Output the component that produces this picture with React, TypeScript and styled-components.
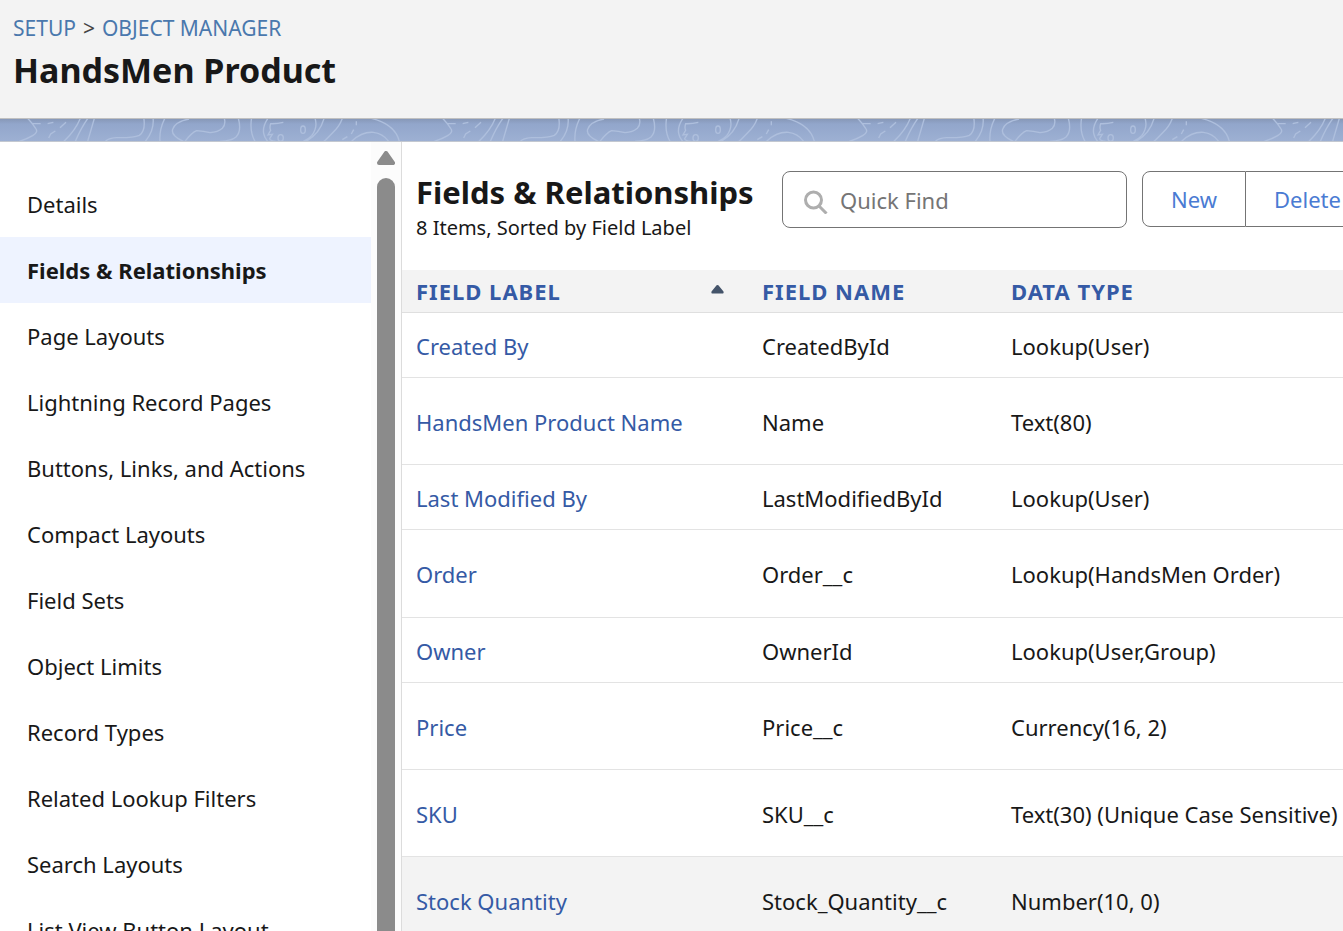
import React from 'react';
import styled, { createGlobalStyle } from 'styled-components';

const Global = createGlobalStyle`
  *, *::before, *::after { box-sizing: border-box; }
  body { margin: 0; background: #fff; color: #181818; overflow: hidden; font: 22px/32px "Noto Sans", "Open Sans", sans-serif; }
  button, input { font: inherit; }
  h1, h2, p, ul { margin: 0; padding: 0; }
`;

const Page = styled.div`
  height: 100vh;
  display: flex;
  flex-direction: column;
`;

const Header = styled.header`
  flex: none;
  height: 119px;
  padding: 12px 13px;
  background: #f3f3f3;
  border-bottom: 1px solid #c0c0c0;
`;

const Crumbs = styled.nav`
  display: flex;
  gap: 7px;
  color: #444;
  font-size: 21px;
`;

const CrumbLink = styled.a`
  color: #4a78ad;
  text-decoration: none;
`;

const PageTitle = styled.h1`
  font-size: 34px;
  line-height: 52px;
  font-weight: 700;
`;

const Band = styled.div`
  flex: none;
  height: 23px;
  border-bottom: 1px solid #c3c8d0;
  background: linear-gradient(#8798b8, #92a6cb 5px, #9db0d3);
  svg { display: block; }
`;

const Body = styled.div`
  flex: 1;
  min-height: 0;
  display: flex;
`;

const Sidebar = styled.aside`
  flex: none;
  width: 402px;
  display: flex;
  border-right: 1px solid #dcdcdc;
`;

const NavList = styled.ul`
  flex: 1;
  padding-top: 29px;
  list-style: none;
  overflow: hidden;
`;

const NavLink = styled.a<{ $active?: boolean }>`
  display: block;
  height: 66px;
  padding: 17px 27px;
  line-height: 32px;
  white-space: nowrap;
  color: #181818;
  text-decoration: none;
  background: ${(p) => (p.$active ? '#eef3ff' : 'transparent')};
  font-weight: ${(p) => (p.$active ? 700 : 400)};
`;

const Track = styled.div`
  flex: none;
  width: 30px;
  padding-top: 9px;
  display: flex;
  flex-direction: column;
  align-items: center;
  gap: 13px;
  background: #fcfcfc;
`;

const Thumb = styled.div`
  flex: 1;
  width: 18px;
  border-radius: 9px 9px 0 0;
  background: #8b8b8b;
`;

const Main = styled.main`
  flex: 1;
  min-width: 0;
  overflow: hidden;
`;

const Toolbar = styled.div`
  height: 128px;
  padding: 29px 0 0 14px;
  display: flex;
  align-items: flex-start;
`;

const Heading = styled.div`
  flex: none;
  width: 366px;
  white-space: nowrap;
`;

const SectionTitle = styled.h2`
  font-size: 31px;
  line-height: 42px;
`;

const Summary = styled.p`
  font-size: 20px;
  line-height: 30px;
`;

const Search = styled.label`
  flex: none;
  width: 345px;
  height: 57px;
  margin-right: 15px;
  padding: 0 21px;
  display: flex;
  align-items: center;
  gap: 12px;
  border: 1px solid #747474;
  border-radius: 8px;
`;

const SearchInput = styled.input`
  flex: 1;
  min-width: 0;
  padding: 0;
  border: 0;
  outline: 0;
  background: none;
  &::placeholder { color: #757575; opacity: 1; }
`;

const Button = styled.button`
  flex: none;
  height: 56px;
  padding: 0 28px;
  color: #4a7bd3;
  background: #fff;
  border: 1px solid #747474;
  &:first-child { border-radius: 8px 0 0 8px; }
  & + & { border-left: 0; }
`;

const ButtonGroup = styled.div`
  flex: none;
  display: flex;
`;

const Table = styled.table`
  width: 100%;
  border-collapse: separate;
  border-spacing: 0;
  table-layout: fixed;
  white-space: nowrap;
`;

const HeadCell = styled.th<{ $width?: number }>`
  width: ${(p) => (p.$width ? p.$width + 'px' : 'auto')};
  height: 43px;
  padding: 0 0 0 14px;
  text-align: left;
  font-weight: 700;
  letter-spacing: 1px;
  color: #355aa5;
  background: #f3f3f3;
  border-bottom: 1px solid #dfdfdf;
`;

const SortLabel = styled.div`
  display: flex;
  align-items: center;
  justify-content: space-between;
  padding-right: 24px;
`;

const Row = styled.tr<{ $height: number; $hover?: boolean }>`
  height: ${(p) => p.$height}px;
  background: ${(p) => (p.$hover ? '#f3f3f3' : '#fff')};
`;

const Cell = styled.td<{ $top: number }>`
  padding: ${(p) => p.$top}px 0 0 14px;
  vertical-align: top;
  border-bottom: 1px solid #e3e3e3;
`;

const FieldLink = styled.a`
  color: #355aa5;
  text-decoration: none;
`;

const navItems = [
  'Details', 'Fields & Relationships', 'Page Layouts', 'Lightning Record Pages',
  'Buttons, Links, and Actions', 'Compact Layouts', 'Field Sets', 'Object Limits',
  'Record Types', 'Related Lookup Filters', 'Search Layouts', 'List View Button Layout',
];

const fields = [
  { label: 'Created By', name: 'CreatedById', type: 'Lookup(User)', height: 65, top: 17 },
  { label: 'HandsMen Product Name', name: 'Name', type: 'Text(80)', height: 87, top: 28 },
  { label: 'Last Modified By', name: 'LastModifiedById', type: 'Lookup(User)', height: 65, top: 17 },
  { label: 'Order', name: 'Order__c', type: 'Lookup(HandsMen Order)', height: 88, top: 28 },
  { label: 'Owner', name: 'OwnerId', type: 'Lookup(User,Group)', height: 65, top: 17 },
  { label: 'Price', name: 'Price__c', type: 'Currency(16, 2)', height: 87, top: 28 },
  { label: 'SKU', name: 'SKU__c', type: 'Text(30) (Unique Case Sensitive)', height: 87, top: 28 },
  { label: 'Stock Quantity', name: 'Stock_Quantity__c', type: 'Number(10, 0)', height: 87, top: 28, hover: true },
];

const Contours = () => (
  <svg width="100%" height="22" aria-hidden="true">
    <defs>
      <pattern id="contours" width="415" height="22" patternUnits="userSpaceOnUse">
        <g transform="scale(.33333) translate(0 -27)" fill="none" stroke="#aebfdd" strokeWidth="4">
          <path d="M80 22Q95 37 107 55Q116 66 98 77Q83 86 58 94M97 41H122M143 41L160 37M198 37L180 53M166 63L152 72L146 84" />
          <path d="M242 22Q229 58 192 94M266 22Q246 48 226 94M284 22L263 94M431 22Q438 62 418 76Q400 84 350 83Q324 85 316 94M459 22Q464 60 436 94" />
          <path d="M496 22Q477 58 480 94M550 94Q512 77 518 58Q525 35 567 27M672 22Q679 43 667 55Q654 67 630 68Q610 64 590 62Q576 67 555 94M714 22Q726 61 709 80Q696 92 660 94" />
          <path d="M755 22Q748 64 765 94M806 22Q787 48 791 70Q793 83 803 94M850 37Q830 42 812 41Q808 52 812 61L804 75L817 73L809 86Q812 93 827 94M944 22Q955 50 935 77Q925 88 910 94M973 22Q961 70 918 94" />
          <ellipse cx="909" cy="59" rx="7" ry="11" />
          <ellipse cx="842" cy="84" rx="8" ry="10" />
          <path d="M1028 22Q1020 48 998 68Q980 87 972 94M1069 34V46M1061 59L1054 72M1042 80L1027 89M1055 94Q1085 65 1120 67Q1148 70 1166 94M1100 22Q1184 38 1198 94" />
        </g>
      </pattern>
    </defs>
    <rect width="100%" height="22" fill="url(#contours)" />
  </svg>
);

export default function App() {
  return (
    <Page>
      <Global />
      <Header>
        <Crumbs aria-label="Breadcrumb">
          <CrumbLink href="#setup">SETUP</CrumbLink>
          <span>&gt;</span>
          <CrumbLink href="#objects">OBJECT MANAGER</CrumbLink>
        </Crumbs>
        <PageTitle>HandsMen Product</PageTitle>
      </Header>
      <Band><Contours /></Band>
      <Body>
        <Sidebar>
          <NavList>
            {navItems.map((item, i) => (
              <li key={item}><NavLink href="#section" $active={i === 1}>{item}</NavLink></li>
            ))}
          </NavList>
          <Track>
            <svg width="18" height="14" viewBox="0 0 18 14" aria-hidden="true">
              <path d="M9 2L16 12H2Z" fill="#8b8b8b" stroke="#8b8b8b" strokeWidth="4" strokeLinejoin="round" />
            </svg>
            <Thumb />
          </Track>
        </Sidebar>
        <Main>
          <Toolbar>
            <Heading>
              <SectionTitle>Fields &amp; Relationships</SectionTitle>
              <Summary>8 Items, Sorted by Field Label</Summary>
            </Heading>
            <Search>
              <svg width="24" height="28" viewBox="0 0 24 28" fill="none" stroke="#aeaeae" aria-hidden="true">
                <circle cx="9.5" cy="14" r="8" strokeWidth="3" />
                <path d="M15 20L22.500 27.500" strokeWidth="3" />
              </svg>
              <SearchInput type="search" placeholder="Quick Find" aria-label="Quick Find" />
            </Search>
            <ButtonGroup>
              <Button type="button">New</Button>
              <Button type="button">Delete</Button>
            </ButtonGroup>
          </Toolbar>
          <Table>
            <thead>
              <tr>
                <HeadCell $width={346}>
                  <SortLabel>
                    FIELD LABEL
                    <svg width="13" height="12" viewBox="0 0 13 12" aria-hidden="true">
                      <path d="M6.500 0Q7.500 0 8 1L12.500 6.500Q13 8.500 12 8.500H1Q0 8.500 .5 6.500L5 1Q5.500 0 6.500 0Z" fill="#44546a" />
                    </svg>
                  </SortLabel>
                </HeadCell>
                <HeadCell $width={249}>FIELD NAME</HeadCell>
                <HeadCell>DATA TYPE</HeadCell>
              </tr>
            </thead>
            <tbody>
              {fields.map((f) => (
                <Row key={f.name} $height={f.height} $hover={f.hover}>
                  <Cell $top={f.top}><FieldLink href="#field">{f.label}</FieldLink></Cell>
                  <Cell $top={f.top}>{f.name}</Cell>
                  <Cell $top={f.top}>{f.type}</Cell>
                </Row>
              ))}
            </tbody>
          </Table>
        </Main>
      </Body>
    </Page>
  );
}
